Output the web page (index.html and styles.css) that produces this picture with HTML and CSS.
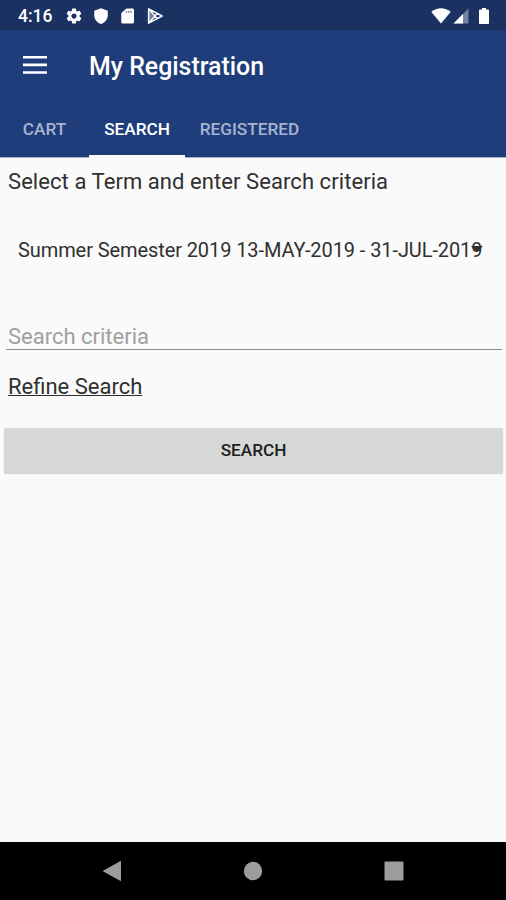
FILE: index.html
```html
<!DOCTYPE html>
<html lang="en">
<head>
    <meta charset="UTF-8">
    <meta name="viewport" content="width=device-width, initial-scale=1.0">
    <title>My Registration</title>
    <link rel="stylesheet" href="styles.css">
</head>
<body>
    <div class="status-bar">
        <span class="clock">4:16</span>
        <div class="status-icons">
            <svg width="18" height="18" viewBox="0 0 24 24"><path d="M19.43 12.98c.04-.32.07-.64.07-.98s-.03-.66-.07-.98l2.11-1.65c.19-.15.24-.42.12-.64l-2-3.46c-.12-.22-.39-.3-.61-.22l-2.49 1c-.52-.4-1.08-.73-1.69-.98l-.38-2.65C14.46 2.18 14.25 2 14 2h-4c-.25 0-.46.18-.49.42l-.38 2.65c-.61.25-1.17.59-1.69.98l-2.49-1c-.23-.09-.49 0-.61.22l-2 3.46c-.13.22-.07.49.12.64l2.11 1.65c-.04.32-.07.65-.07.98s.03.66.07.98l-2.11 1.65c-.19.15-.24.42-.12.64l2 3.46c.12.22.39.3.61.22l2.49-1c.52.4 1.08.73 1.69.98l.38 2.65c.03.24.24.42.49.42h4c.25 0 .46-.18.49-.42l.38-2.65c.61-.25 1.17-.59 1.69-.98l2.49 1c.23.09.49 0 .61-.22l2-3.46c.12-.22.07-.49-.12-.64l-2.11-1.65zM12 15.5c-1.93 0-3.5-1.57-3.5-3.5s1.57-3.5 3.5-3.5 3.5 1.57 3.5 3.5-1.57 3.5-3.5 3.5z"/></svg>
            <svg width="18" height="18" viewBox="0 0 24 24"><path d="M12 1.500L3 5v6c0 5.550 3.840 10.200 9 11.500 5.160-1.300 9-5.950 9-11.500V5z"/></svg>
            <svg width="18" height="18" viewBox="0 0 24 24"><path d="M18 2h-8L3 8v12c0 1.100.9 2 2 2h13c1.100 0 2-.9 2-2V4c0-1.100-.9-2-2-2z"/><path class="slots" d="M9 5h2v3H9zM12 5h2v3h-2zM15 5h2v3h-2z"/></svg>
            <svg width="18" height="18" viewBox="0 0 24 24"><path class="dim" d="M3 2l10 10L3 22z"/><path class="play" d="M3.500 2.500v19L21.500 12zM4 3l11 12.500M4 21L15 8.500"/></svg>
        </div>
        <div class="signal-icons">
            <svg width="20" height="18" viewBox="0 0 20 18"><path d="M.4 5C3.200 2.600 6.500 1.300 10 1.300S16.800 2.600 19.600 5L10 16.600z"/></svg>
            <svg width="16" height="16" viewBox="0 0 16 16"><path class="dim" d="M15.500.5v15H.5z"/><path d="M10 6v9.500H.5z"/></svg>
            <svg class="battery" width="12" height="18" viewBox="0 0 12 18"><path d="M4 1h4v1.500h2c.6 0 1 .4 1 1V16c0 .6-.4 1-1 1H2c-.6 0-1-.4-1-1V3.500c0-.6.4-1 1-1h2z"/></svg>
        </div>
    </div>

    <header class="app-bar">
        <div class="toolbar">
            <svg class="menu" width="24" height="18" viewBox="0 0 24 18"><path d="M0 0h24v2.600H0zM0 7.600h24v2.600H0zM0 15.200h24v2.600H0z"/></svg>
            <h1>My Registration</h1>
        </div>
        <nav class="tabs">
            <a class="tab tab-cart">CART</a>
            <a class="tab tab-search active">SEARCH</a>
            <a class="tab tab-registered">REGISTERED</a>
        </nav>
    </header>

    <main class="content">
        <p class="hint">Select a Term and enter Search criteria</p>
        <div class="term">
            <span class="term-text">Summer Semester 2019 13-MAY-2019 - 31-JUL-2019</span>
            <svg class="arrow" width="12" height="6" viewBox="0 0 12 6"><path d="M0 0h12L6 6z"/></svg>
        </div>
        <input type="text" class="criteria" placeholder="Search criteria">
        <a class="refine">Refine Search</a>
        <button class="search-button">SEARCH</button>
    </main>

    <div class="nav-bar">
        <svg width="20" height="22" viewBox="0 0 20 22"><path d="M19 .8v20.400L.5 11z"/></svg>
        <svg width="20" height="20" viewBox="0 0 20 20"><circle cx="10" cy="10" r="9.200"/></svg>
        <svg width="20" height="20" viewBox="0 0 20 20"><rect x=".5" y=".5" width="19" height="19" rx="1"/></svg>
    </div>
</body>
</html>
```
FILE: styles.css
```css
* {
    box-sizing: border-box;
}
body {
    margin: 0;
    height: 900px;
    display: flex;
    flex-direction: column;
    font-family: Roboto, sans-serif;
    background-color: #fafafa;
    color: #303030;
    overflow: hidden;
}
svg {
    display: block;
    flex: none;
    fill: #fff;
}
.dim {
    opacity: 0.4;
}
.slots {
    fill: #8d98b0;
}
.play {
    fill: none;
    stroke: #fff;
    stroke-width: 2;
    stroke-linejoin: round;
}
.status-bar {
    height: 30px;
    padding: 1px 16px 0 18px;
    display: flex;
    align-items: center;
    background-color: #1a3161;
    color: #fff;
}
.clock {
    width: 47px;
    font-size: 17.5px;
    font-weight: 500;
}
.status-icons {
    display: flex;
    gap: 9px;
}
.signal-icons {
    display: flex;
    align-items: center;
    margin-left: auto;
    gap: 2px;
}
.battery {
    margin-left: 7px;
}
.app-bar {
    height: 127px;
    background-color: #1f3d7b;
    box-shadow: 0 1px 0 #a9b4ca;
    color: #fff;
}
.toolbar {
    height: 71px;
    padding-left: 23px;
    display: flex;
    align-items: center;
}
.menu {
    margin-top: -1px;
}
h1 {
    margin: 1px 0 0 42px;
    font-size: 24.9px;
    font-weight: 500;
}
.tabs {
    height: 57px;
    display: flex;
}
.tab {
    display: flex;
    align-items: center;
    justify-content: center;
    padding-top: 2px;
    font-size: 17.2px;
    font-weight: 500;
    color: #a7b3cf;
    border-bottom: 3px solid transparent;
}
.tab-cart {
    width: 89px;
}
.tab-search {
    width: 96px;
}
.tab-registered {
    width: 129px;
}
.tab.active {
    color: #fff;
    border-bottom-color: #fafafa;
}
.content {
    flex: 1;
    display: flex;
    flex-direction: column;
    padding: 10px 4px 0;
}
.hint {
    margin: 0 4px;
    font-size: 22px;
    line-height: 30px;
    letter-spacing: 0.07px;
}
.term {
    height: 60px;
    margin-top: 23px;
    padding-left: 14px;
    display: flex;
    align-items: center;
    position: relative;
    font-size: 20px;
    letter-spacing: -0.09px;
    white-space: nowrap;
}
.arrow {
    position: absolute;
    right: 19px;
    top: 26px;
    fill: #303030;
}
.criteria {
    height: 30px;
    margin: 40px 0 0 2px;
    padding: 3px 2px 0;
    border: none;
    border-bottom: 1px solid #8c8c8c;
    background: none;
    font-family: inherit;
    font-size: 22px;
    outline: none;
}
.criteria::placeholder {
    color: #a0a0a0;
}
.refine {
    align-self: flex-start;
    margin: 22px 4px 0;
    font-size: 22px;
    line-height: 30px;
    text-decoration: underline;
    text-decoration-thickness: 1px;
}
.search-button {
    height: 46px;
    margin: 26px -1px 0 0;
    padding: 0 0 2px;
    border: none;
    border-radius: 2px;
    background-color: #d6d8d7;
    box-shadow: 0 0 1px #c4c4c4;
    color: #202020;
    font-family: inherit;
    font-size: 17.2px;
    font-weight: 500;
}
.nav-bar {
    height: 58px;
    padding: 0 102px;
    display: flex;
    align-items: center;
    justify-content: space-between;
    background-color: #000;
}
.nav-bar svg {
    fill: #9c9c9c;
}
```
